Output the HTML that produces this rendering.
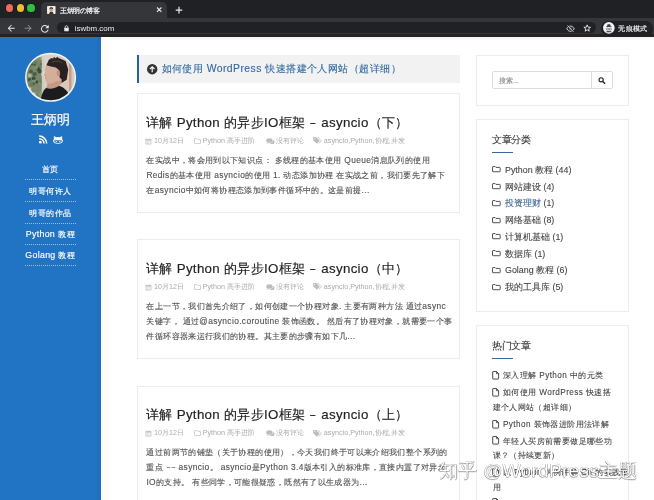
<!DOCTYPE html>
<html><head><meta charset="utf-8">
<style>
*{margin:0;padding:0;box-sizing:border-box}
html,body{width:654px;height:500px;overflow:hidden;background:#fff}
body{position:relative;font-family:"Liberation Sans",sans-serif;will-change:transform}
.a{position:absolute;white-space:nowrap}
svg{position:absolute;overflow:visible}
/* chrome */
#strip{left:0;top:0;width:654px;height:18px;background:#202124}
#tab{left:40.7px;top:1.5px;width:126px;height:17px;background:#35363a;border-radius:5px 5px 0 0}
#toolbar{left:0;top:17.6px;width:654px;height:16.7px;background:#35363a}
#sep{left:0;top:34.3px;width:654px;height:3.1px;background:#252220}
#omni{left:57px;top:21.7px;width:539px;height:11.8px;background:#202124;border-radius:6px}
#pill{left:600.8px;top:21px;width:52px;height:14.6px;background:#202124;border-radius:7.3px}
.light{border-radius:50%;width:7.2px;height:7.2px;top:4.4px;box-shadow:0 0 0 .6px rgba(0,0,0,.35)}
/* page */
#side{left:0;top:37.4px;width:101px;height:463px;background:#2173c4;box-shadow:inset -4px 0 0 rgba(40,60,90,.07)}
.menu{left:0;width:101px;text-align:center;color:#fff;font-size:8.4px;letter-spacing:.6px;-webkit-text-stroke:.15px #fff;line-height:12px}
.menu b{font-weight:normal;font-size:8.8px;letter-spacing:.3px}
.dot{left:25px;width:51px;height:0;border-top:1px dotted rgba(255,255,255,.55)}
#notice{left:137px;top:55px;width:323px;height:27.5px;background:#f2f2f2;border-left:2.5px solid #2b5f9a}
.card{left:137px;width:322.5px;height:120.2px;border:1px solid #ececec;background:#fff;box-shadow:0 0 .6px #f2f2f2}
.title{left:146px;font-size:13.3px;letter-spacing:.33px;color:#222;line-height:16px;-webkit-text-stroke:.15px #222}
.meta{font-size:7.2px;color:#aaa;line-height:10px}
.ex{left:146.4px;font-size:8.4px;letter-spacing:.37px;color:#505050;-webkit-text-stroke:.12px #505050;line-height:15.2px;white-space:nowrap}
.widget{left:475.5px;width:153.3px;border:1px solid #ececec;background:#fff;box-shadow:0 0 .6px #f2f2f2}
.wt{left:492px;font-size:9.6px;letter-spacing:-.3px;color:#333;line-height:12px;-webkit-text-stroke:.1px #333}
.wl{left:492px;width:21px;height:1px;background:#3a689a}
.ci{left:505px;font-size:8.9px;color:#3e3e3e;line-height:12px;-webkit-text-stroke:.08px #3e3e3e}
.hi{left:492.5px;font-size:8.2px;letter-spacing:.4px;color:#3e3e3e;-webkit-text-stroke:.08px #3e3e3e;line-height:14.8px;text-indent:10.5px}
</style></head><body>
<!-- browser chrome -->
<div class="a" id="strip"></div>
<div class="a light" style="left:6.3px;background:#ec6b5f"></div>
<div class="a light" style="left:17px;background:#efbd35"></div>
<div class="a light" style="left:27.4px;background:#2fbf45"></div>
<div class="a" id="tab"></div>
<svg style="left:47.1px;top:5.9px" width="8.6" height="8" viewBox="0 0 16 15"><rect width="16" height="15" rx="1.5" fill="#efe9e4"/><path d="M4 15c0-3 1.5-4 4-4s4 1 4 4z" fill="#3a302c"/><ellipse cx="8" cy="7.3" rx="3" ry="3.6" fill="#c89f86"/><path d="M4.6 6.5C4.4 3.5 6 2.3 8 2.3s3.8 1.2 3.5 4.2c-.8-1.3-2-1.8-3.5-1.8S5.4 5.2 4.6 6.5z" fill="#2d2522"/></svg>
<div class="a" style="left:60px;top:6.6px;font-size:6.6px;letter-spacing:-.45px;color:#f1f3f4;line-height:8px;-webkit-text-stroke:.2px #f1f3f4">王炳明の博客</div>
<svg style="left:0;top:0" width="654" height="40">
 <path d="M157 7.5l4.4 4.4M161.4 7.5L157 11.9" stroke="#e8eaed" stroke-width="1.1"/>
 <path d="M179 6.8v6.6M175.7 10.1h6.6" stroke="#e8eaed" stroke-width="1.2"/>
</svg>
<div class="a" id="toolbar"></div>
<div class="a" id="sep"></div>
<div class="a" id="omni"></div>
<div class="a" id="pill"></div>
<div class="a" style="left:74.8px;top:23.5px;font-size:7.9px;color:#eceef0;line-height:9px">iswbm.com</div>
<div class="a" style="left:618.4px;top:24.9px;font-size:7.2px;color:#f1f3f4;line-height:8px;-webkit-text-stroke:.18px #f1f3f4;letter-spacing:.15px">无痕模式</div>


<!-- chrome icons -->
<svg style="left:6.4px;top:23.2px" width="10.4" height="10.4" viewBox="0 0 24 24"><path fill="#e8eaed" d="M20 11H7.83l5.59-5.59L12 4l-8 8 8 8 1.41-1.41L7.83 13H20v-2z"/></svg>
<svg style="left:23.1px;top:23.2px" width="10.4" height="10.4" viewBox="0 0 24 24"><path fill="#8a8b8e" d="M12 4l-1.41 1.41L16.17 11H4v2h12.17l-5.58 5.59L12 20l8-8z"/></svg>
<svg style="left:39.4px;top:22.6px" width="11.7" height="11.7" viewBox="0 0 24 24"><path fill="#e8eaed" d="M17.65 6.35A7.958 7.958 0 0012 4c-4.42 0-7.99 3.58-7.99 8s3.57 8 7.99 8c3.73 0 6.840-2.55 7.73-6h-2.08A5.99 5.99 0 0112 18c-3.31 0-6-2.690-6-6s2.69-6 6-6c1.66 0 3.14.69 4.22 1.78L13 11h7V4l-2.35 2.35z"/></svg>
<svg style="left:63.8px;top:25px" width="5" height="6.5" viewBox="0 0 10 13"><path d="M2.3 6V4.2a2.7 2.7 0 015.4 0V6" fill="none" stroke="#e8eaed" stroke-width="1.5"/><rect x="0.5" y="5.6" width="9" height="7" rx="1" fill="#e8eaed"/></svg>
<svg style="left:566.2px;top:24.8px" width="9" height="7.4" viewBox="0 0 24 20"><path d="M2 10c2.5-4.5 6-7 10-7s7.5 2.5 10 7c-2.5 4.5-6 7-10 7S4.5 14.5 2 10z" fill="none" stroke="#e8eaed" stroke-width="2.6"/><circle cx="12" cy="10" r="3" fill="#e8eaed"/><path d="M4 1.5l16 17" stroke="#202124" stroke-width="4.5"/><path d="M4 1.5l16 17" stroke="#e8eaed" stroke-width="2.4"/></svg>
<svg style="left:583.2px;top:23.9px" width="8.4" height="8.4" viewBox="0 0 24 24"><polygon points="12.00,2.50 14.53,9.02 21.51,9.41 16.09,13.83 17.88,20.59 12.00,16.80 6.12,20.59 7.91,13.83 2.49,9.41 9.47,9.02" fill="none" stroke="#e8eaed" stroke-width="2.6" stroke-linejoin="round"/></svg>
<svg style="left:603px;top:22.4px" width="11.7" height="11.7" viewBox="0 0 24 24"><circle cx="12" cy="12" r="12" fill="#f1f3f4"/><path fill="#3c4043" d="M9.3 4.8h5.4l1.2 4.4h1.9v1H6.2v-1h1.9z"/><circle cx="8.9" cy="14.6" r="2.2" fill="none" stroke="#3c4043" stroke-width="1.1"/><circle cx="15.1" cy="14.6" r="2.2" fill="none" stroke="#3c4043" stroke-width="1.1"/><path d="M11.1 14.3q.9-.6 1.8 0" stroke="#3c4043" stroke-width="1" fill="none"/><path fill="#3c4043" d="M6.5 19.5q5.5-3 11 0v1.5h-11z" opacity=".9"/></svg>

<!-- page -->
<div class="a" style="left:101px;top:37.4px;width:553px;height:4px;background:linear-gradient(rgba(0,0,0,.05),rgba(0,0,0,0))"></div>
<div class="a" style="left:101px;top:37.4px;width:9px;height:463px;background:linear-gradient(90deg,#f4fbff,#fffdf4 30%,#fffef9 80%,#fff)"></div>
<div class="a" id="side"></div>
<svg style="left:25px;top:53.3px" width="51" height="49" viewBox="0 0 51 49">
<defs><clipPath id="cc"><ellipse cx="25.6" cy="24.3" rx="24.6" ry="23.6"/></clipPath>
<filter id="bl" x="-10%" y="-10%" width="120%" height="120%"><feGaussianBlur stdDeviation=".6"/></filter></defs>
<g clip-path="url(#cc)"><g filter="url(#bl)">
<rect width="51" height="49" fill="#d6c7b8"/>
<rect x="36" y="0" width="15" height="49" fill="#dcc8b8"/>
<rect x="44" y="6" width="2.5" height="43" fill="#c0a088"/>
<rect x="18" y="0" width="16" height="9" fill="#ddd1c8"/>
<path d="M0 0h19.5v49H0z" fill="#7a876c"/>
<circle cx="4.5" cy="26.7" r="1.6" fill="#3d4d37"/>
<circle cx="9.0" cy="28.5" r="2.0" fill="#7f8f6f"/>
<circle cx="8.9" cy="27.0" r="1.3" fill="#c0c6b2"/>
<circle cx="8.9" cy="41.0" r="1.8" fill="#c0c6b2"/>
<circle cx="16.4" cy="11.4" r="1.2" fill="#3d4d37"/>
<circle cx="7.4" cy="0.7" r="2.2" fill="#4c5e44"/>
<circle cx="14.4" cy="29.0" r="1.5" fill="#8d9a7e"/>
<circle cx="15.6" cy="13.2" r="2.0" fill="#6b7c5e"/>
<circle cx="13.6" cy="45.1" r="1.6" fill="#7f8f6f"/>
<circle cx="11.0" cy="47.2" r="1.2" fill="#a9b29a"/>
<circle cx="1.9" cy="6.7" r="1.3" fill="#c0c6b2"/>
<circle cx="8.3" cy="30.7" r="1.5" fill="#3d4d37"/>
<circle cx="15.8" cy="28.1" r="1.9" fill="#6b7c5e"/>
<circle cx="11.1" cy="44.3" r="2.1" fill="#8d9a7e"/>
<circle cx="16.3" cy="48.6" r="2.1" fill="#4c5e44"/>
<circle cx="13.3" cy="16.0" r="1.9" fill="#3d4d37"/>
<circle cx="10.8" cy="35.0" r="1.3" fill="#7f8f6f"/>
<circle cx="18.8" cy="13.1" r="1.2" fill="#6b7c5e"/>
<circle cx="16.2" cy="48.5" r="1.1" fill="#7f8f6f"/>
<circle cx="1.3" cy="44.0" r="1.0" fill="#6b7c5e"/>
<circle cx="14.6" cy="42.8" r="1.1" fill="#3d4d37"/>
<circle cx="14.5" cy="18.5" r="1.9" fill="#3d4d37"/>
<circle cx="16.7" cy="48.1" r="1.8" fill="#8d9a7e"/>
<circle cx="5.9" cy="3.8" r="2.0" fill="#8d9a7e"/>
<circle cx="18.0" cy="47.6" r="1.5" fill="#a9b29a"/>
<circle cx="3.0" cy="2.1" r="2.4" fill="#a9b29a"/>
<circle cx="6.8" cy="6.8" r="2.4" fill="#6b7c5e"/>
<circle cx="8.7" cy="25.5" r="2.0" fill="#3d4d37"/>
<circle cx="12.9" cy="5.0" r="2.6" fill="#7f8f6f"/>
<circle cx="9.6" cy="21.1" r="2.2" fill="#4c5e44"/>
<circle cx="17.8" cy="21.4" r="1.4" fill="#a9b29a"/>
<circle cx="10.4" cy="0.6" r="1.7" fill="#3d4d37"/>
<circle cx="6.0" cy="18.4" r="1.9" fill="#4c5e44"/>
<circle cx="1.1" cy="30.7" r="1.7" fill="#c0c6b2"/>
<circle cx="17.4" cy="29.8" r="1.4" fill="#6b7c5e"/>
<circle cx="0.4" cy="3.0" r="2.1" fill="#a9b29a"/>
<circle cx="4.8" cy="22.4" r="1.9" fill="#a9b29a"/>
<circle cx="3.4" cy="9.1" r="2.2" fill="#7f8f6f"/>
<circle cx="11.3" cy="14.7" r="1.6" fill="#7f8f6f"/>
<circle cx="15.4" cy="47.6" r="2.1" fill="#4c5e44"/>
<circle cx="5.9" cy="10.9" r="2.3" fill="#4c5e44"/>
<circle cx="6.2" cy="33.2" r="2.0" fill="#8d9a7e"/>
<circle cx="1.9" cy="15.8" r="1.5" fill="#7f8f6f"/>
<circle cx="4.3" cy="39.7" r="2.5" fill="#8d9a7e"/>
<circle cx="6.4" cy="31.9" r="2.4" fill="#6b7c5e"/>
<circle cx="5.1" cy="38.6" r="1.1" fill="#4c5e44"/>
<circle cx="6.0" cy="41.0" r="1.9" fill="#7f8f6f"/>
<circle cx="5.3" cy="39.6" r="2.0" fill="#7f8f6f"/>
<circle cx="11.8" cy="28.9" r="1.7" fill="#3d4d37"/>
<circle cx="15.1" cy="13.3" r="1.6" fill="#6b7c5e"/>
<circle cx="5.5" cy="27.8" r="1.1" fill="#6b7c5e"/>
<circle cx="3.0" cy="0.2" r="2.5" fill="#3d4d37"/>
<circle cx="18.8" cy="21.3" r="2.5" fill="#c0c6b2"/>
<circle cx="4.2" cy="36.5" r="2.3" fill="#c0c6b2"/>
<circle cx="14.2" cy="47.2" r="1.9" fill="#4c5e44"/>
<circle cx="16.4" cy="42.0" r="2.6" fill="#8d9a7e"/>
<circle cx="15.4" cy="2.2" r="2.4" fill="#c0c6b2"/>
<circle cx="9.7" cy="9.7" r="2.4" fill="#6b7c5e"/>
<circle cx="11.0" cy="0.6" r="2.2" fill="#4c5e44"/>
<circle cx="9.6" cy="11.7" r="1.0" fill="#3d4d37"/>
<circle cx="7.9" cy="46.0" r="2.0" fill="#a9b29a"/>
<circle cx="2.4" cy="47.6" r="1.9" fill="#7f8f6f"/>
<circle cx="14.9" cy="17.2" r="1.3" fill="#3d4d37"/>
<circle cx="16.9" cy="5.8" r="1.4" fill="#a9b29a"/>
<circle cx="17.5" cy="39.5" r="2.3" fill="#8d9a7e"/>
<circle cx="9.3" cy="28.0" r="1.6" fill="#7f8f6f"/>
<circle cx="5.2" cy="13.2" r="1.8" fill="#6b7c5e"/>
<circle cx="1.0" cy="15.8" r="2.3" fill="#7f8f6f"/>
<circle cx="1.0" cy="6.2" r="1.2" fill="#8d9a7e"/>
<circle cx="9.2" cy="1.6" r="2.1" fill="#3d4d37"/>
<rect x="16.8" y="0" width="4.2" height="49" fill="#d9d5cd" opacity=".9"/>
<path d="M15.5 49c.5-6 2-11 5.5-14 4-1.8 8.5-2.5 12.5-2.3 5 1 9 5 10.5 9l1 7.3z" fill="#1f1d1e"/>
<path d="M22.4 29.5c.2 2 0 4-1 5.6 3.5 1.2 8 .8 12-1.8l3.5-3.5-1-4z" fill="#c29a86"/>
<path d="M21.4 12.2l-1.6 3.7.5 3.1-1.6 3.1 1.6 1.6-.5 1.5 1 1.3-.4 1.5 1.2 1.5 3.4 1.4 4-1.5 3-1.5 3.6.3-.5-4-1.2-3.7-.2-7-3.8-8.5z" fill="#d4ae9a"/>
<path d="M19.8 22.5l1.3.3M20.2 25.2l1.2-.1" stroke="#a57a66" stroke-width=".6"/>
<path d="M21.4 12.2L24 6.5l8.3-2.1 8.3 3.6 2.6 8.4-1.5 10.4-5.2 3.1.2-3.4-2.1-1.9-.7-7.7-3.1-2.3-4.8-1.1z" fill="#2a2421"/>
<path d="M24.5 7.2l2-2.2 1.2 1.5 1.5-2.2 1.3 1.7 2-1.8 1.5 1.9" stroke="#3a302b" stroke-width="1" fill="none"/>
<path d="M26.5 9.5c3-1.8 7.5-2 11 .5" stroke="#57483f" stroke-width=".9" fill="none"/>
<ellipse cx="33.4" cy="20" rx="1.7" ry="3" fill="#bb927e"/>
</g></g>
<ellipse cx="25.6" cy="24.3" rx="24.8" ry="23.8" fill="none" stroke="#eef5fc" stroke-width="1.5"/>
</svg>
<div class="a" style="left:0;top:111.5px;width:101px;text-align:center;color:#fff;font-size:12.5px;line-height:16px;-webkit-text-stroke:.2px #fff">王炳明</div>

<div class="a menu" style="top:162.8px">首页</div>
<div class="a dot" style="top:179.3px"></div>
<div class="a menu" style="top:184.8px">明哥何许人</div>
<div class="a dot" style="top:200.5px"></div>
<div class="a menu" style="top:206.5px">明哥的作品</div>
<div class="a dot" style="top:223px"></div>
<div class="a menu" style="top:227.9px"><b>Python</b> 教程</div>
<div class="a dot" style="top:243.7px"></div>
<div class="a menu" style="top:249.4px"><b>Golang</b> 教程</div>
<div class="a dot" style="top:265px"></div>

<div class="a" id="notice"></div>
<div class="a" style="left:161.5px;top:63px;font-size:10.4px;letter-spacing:.45px;color:#33699f;line-height:12px;-webkit-text-stroke:.12px #33699f">如何使用 WordPress 快速搭建个人网站（超详细）</div>

<!-- card 1 -->
<div class="a card" style="top:93.3px"></div>
<div class="a title" style="top:114.5px">详解 Python 的异步IO框架 <span style="display:inline-block;transform:scaleX(.68)">–</span> asyncio（下）</div>
<div class="a meta" style="left:154px;top:135.5px">10月12日</div>
<div class="a meta" style="left:202.7px;top:135.5px">Python 高手进阶</div>
<div class="a meta" style="left:275.6px;top:135.5px">没有评论</div>
<div class="a meta" style="left:323.8px;top:135.5px">asyncio,Python,协程,并发</div>
<div class="a ex" style="top:152.6px">在实战中，将会用到以下知识点： 多线程的基本使用 Queue消息队列的使用<br>Redis的基本使用 asyncio的使用 1. 动态添加协程 在实战之前，我们要先了解下<br>在asyncio中如何将协程态添加到事件循环中的。这是前提...</div>

<!-- card 2 -->
<div class="a card" style="top:239.3px"></div>
<div class="a title" style="top:260.5px">详解 Python 的异步IO框架 <span style="display:inline-block;transform:scaleX(.68)">–</span> asyncio（中）</div>
<div class="a meta" style="left:154px;top:281.5px">10月12日</div>
<div class="a meta" style="left:202.7px;top:281.5px">Python 高手进阶</div>
<div class="a meta" style="left:275.6px;top:281.5px">没有评论</div>
<div class="a meta" style="left:323.8px;top:281.5px">asyncio,Python,协程,并发</div>
<div class="a ex" style="top:298.6px">在上一节，我们首先介绍了，如何创建一个协程对象. 主要有两种方法 通过async<br>关键字， 通过@asyncio.coroutine 装饰函数。 然后有了协程对象，就需要一个事<br>件循环容器来运行我们的协程。其主要的步骤有如下几...</div>

<!-- card 3 -->
<div class="a card" style="top:385.5px"></div>
<div class="a title" style="top:406.7px">详解 Python 的异步IO框架 <span style="display:inline-block;transform:scaleX(.68)">–</span> asyncio（上）</div>
<div class="a meta" style="left:154px;top:427.7px">10月12日</div>
<div class="a meta" style="left:202.7px;top:427.7px">Python 高手进阶</div>
<div class="a meta" style="left:275.6px;top:427.7px">没有评论</div>
<div class="a meta" style="left:323.8px;top:427.7px">asyncio,Python,协程,并发</div>
<div class="a ex" style="top:444.8px">通过前两节的铺垫（关于协程的使用），今天我们终于可以来介绍我们整个系列的<br>重点 <span style="display:inline-block;transform:scaleX(.75)">–</span><span style="display:inline-block;transform:scaleX(.75)">–</span> asyncio。 asyncio是Python 3.4版本引入的标准库，直接内置了对异步<br>IO的支持。 有些同学，可能很疑惑，既然有了以生成器为...</div>

<!-- right sidebar -->
<div class="a widget" style="top:55.2px;height:50.8px"></div>
<div class="a" style="left:492.4px;top:71.4px;width:120.2px;height:17.8px;border:1px solid #dcdcdc;border-radius:1.5px;background:#fff"></div>
<div class="a" style="left:591.2px;top:71.4px;width:1px;height:17.8px;background:#dcdcdc"></div>
<div class="a" style="left:499px;top:76px;font-size:7.4px;color:#8a8a8a;line-height:9px;-webkit-text-stroke:.1px #8a8a8a">搜索...</div>

<div class="a widget" style="top:118.9px;height:192.8px"></div>
<div class="a wt" style="top:134.4px">文章分类</div>
<div class="a wl" style="top:151.6px"></div>
<div class="a ci" style="top:163.8px">Python 教程 (44)</div>
<div class="a ci" style="top:180.5px">网站建设 (4)</div>
<div class="a ci" style="top:197.3px;color:#2f6aa6">投资理财 <span style="color:#444">(1)</span></div>
<div class="a ci" style="top:214px">网络基础 (8)</div>
<div class="a ci" style="top:230.8px">计算机基础 (1)</div>
<div class="a ci" style="top:247.6px">数据库 (1)</div>
<div class="a ci" style="top:264.3px">Golang 教程 (6)</div>
<div class="a ci" style="top:281.1px">我的工具库 (5)</div>

<div class="a widget" style="top:324.6px;height:200px"></div>
<div class="a wt" style="top:339.9px">热门文章</div>
<div class="a wl" style="top:357.9px"></div>
<div class="a hi" style="top:369.3px">深入理解 Python 中的元类</div>
<div class="a hi" style="top:386.1px">如何使用 WordPress 快速搭<br>建个人网站（超详细）</div>
<div class="a hi" style="top:417.7px">Python 装饰器进阶用法详解</div>
<div class="a hi" style="top:434.5px">年轻人买房前需要做足哪些功<br>课？（持续更新）</div>
<div class="a hi" style="top:466.1px">以 Python 为例讲解 Git 的实践应<br>用</div>
<div class="a hi" style="top:500.3px">Python 实现</div>

<!-- social -->
<svg style="left:38.9px;top:134.8px" width="8.4" height="8.8" viewBox="0 0 16 16"><circle cx="2.6" cy="13.4" r="2.6" fill="#fff"/><path d="M.3 6.6a9.2 9.2 0 019.2 9.2M.3 1.5A14.3 14.3 0 0114.6 15.8" stroke="#fff" stroke-width="3" fill="none"/></svg>
<svg style="left:52.7px;top:135.6px" width="10" height="7.8" viewBox="0 0 20 16"><path fill="#fff" d="M1.5 1.5c0-.8.6-1.2 1.3-.9L6.5 2.5c1.1-.3 2.3-.5 3.5-.5s2.4.2 3.5.5L17.2.6c.7-.3 1.3.1 1.3.9V6c.9 1.1 1.5 2.4 1.5 4 0 3.8-3.6 6-10 6S0 13.8 0 10c0-1.6.6-2.9 1.5-4z"/><path fill="#2473c3" d="M4 8.8h12c1.2 0 1.7 1 1.7 2.2 0 2.2-2.6 3.2-7.7 3.2S2.3 13.2 2.3 11c0-1.2.5-2.2 1.7-2.2z"/><ellipse cx="6.4" cy="11.3" rx="1.2" ry="1.6" fill="#fff"/><ellipse cx="13.6" cy="11.3" rx="1.2" ry="1.6" fill="#fff"/></svg>
<!-- notice icon -->
<svg style="left:147.1px;top:63.5px" width="10.4" height="10.4" viewBox="0 0 20 20"><circle cx="10" cy="10" r="10" fill="#333"/><path d="M10 15.8V5M5.6 9.6L10 5.2l4.4 4.4" fill="none" stroke="#fff" stroke-width="2.2"/></svg>
<svg style="left:145px;top:137.6px" width="6.9" height="6.6" viewBox="0 0 14 14"><path d="M1.5 3h11v10h-11z" fill="none" stroke="#bdbdbd" stroke-width="1.5"/><path d="M1.5 3h11v2.5h-11z" fill="#bdbdbd"/><path d="M4 1v3M10 1v3" stroke="#bdbdbd" stroke-width="1.5"/><path d="M3.5 7.5h2v1.5h-2zM6.5 7.5h2v1.5h-2zM9.5 7.5h1.5v1.5h-1.5zM3.5 10h2v1.5h-2zM6.5 10h2v1.5h-2z" fill="#bdbdbd"/></svg>
<svg style="left:194.3px;top:138.2px" width="7" height="5.6" viewBox="0 0 14 11"><path d="M1 1.8c0-.5.3-.8.8-.8h3.5l1.4 1.5h5.5c.5 0 .8.3.8.8v6.9c0 .5-.3.8-.8.8H1.8c-.5 0-.8-.3-.8-.8z" fill="none" stroke="#bdbdbd" stroke-width="1.4"/></svg>
<svg style="left:265.5px;top:137.8px" width="8.8" height="6.4" viewBox="0 0 18 13"><ellipse cx="7" cy="5" rx="6.5" ry="4.6" fill="#bdbdbd"/><path d="M3 8.5L2 12l4-2.5z" fill="#bdbdbd"/><path d="M14.5 4.5c2 .9 3.3 2.3 3.3 3.9 0 1.3-.8 2.4-2 3.1l.8 1.5-3-1c-.7.1-1.1.2-1.8.2-2.2 0-4-.8-5-2 4.8 0 7.9-2.4 7.7-5.7z" fill="#bdbdbd"/></svg>
<svg style="left:312.6px;top:137.3px" width="9.2" height="7" viewBox="0 0 18 14"><path d="M0 1.3C0 .6.6 0 1.3 0h4.2c.4 0 .7.1 1 .4l6.1 6.1c.5.5.5 1.3 0 1.8L8.3 12.6c-.5.5-1.3.5-1.8 0L.4 6.5C.1 6.2 0 5.9 0 5.5z" fill="#bdbdbd"/><circle cx="3" cy="3" r="1.2" fill="#fff"/><path d="M8 0h1.5c.4 0 .7.1 1 .4l6.1 6.1c.5.5.5 1.3 0 1.8l-4.3 4.3c-.5.5-1.1.5-1.6.1l4.6-4.6c.5-.5.5-1.3 0-1.8z" fill="#bdbdbd"/></svg>
<svg style="left:145px;top:283.6px" width="6.9" height="6.6" viewBox="0 0 14 14"><path d="M1.5 3h11v10h-11z" fill="none" stroke="#bdbdbd" stroke-width="1.5"/><path d="M1.5 3h11v2.5h-11z" fill="#bdbdbd"/><path d="M4 1v3M10 1v3" stroke="#bdbdbd" stroke-width="1.5"/><path d="M3.5 7.5h2v1.5h-2zM6.5 7.5h2v1.5h-2zM9.5 7.5h1.5v1.5h-1.5zM3.5 10h2v1.5h-2zM6.5 10h2v1.5h-2z" fill="#bdbdbd"/></svg>
<svg style="left:194.3px;top:284.2px" width="7" height="5.6" viewBox="0 0 14 11"><path d="M1 1.8c0-.5.3-.8.8-.8h3.5l1.4 1.5h5.5c.5 0 .8.3.8.8v6.9c0 .5-.3.8-.8.8H1.8c-.5 0-.8-.3-.8-.8z" fill="none" stroke="#bdbdbd" stroke-width="1.4"/></svg>
<svg style="left:265.5px;top:283.8px" width="8.8" height="6.4" viewBox="0 0 18 13"><ellipse cx="7" cy="5" rx="6.5" ry="4.6" fill="#bdbdbd"/><path d="M3 8.5L2 12l4-2.5z" fill="#bdbdbd"/><path d="M14.5 4.5c2 .9 3.3 2.3 3.3 3.9 0 1.3-.8 2.4-2 3.1l.8 1.5-3-1c-.7.1-1.1.2-1.8.2-2.2 0-4-.8-5-2 4.8 0 7.9-2.4 7.7-5.7z" fill="#bdbdbd"/></svg>
<svg style="left:312.6px;top:283.3px" width="9.2" height="7" viewBox="0 0 18 14"><path d="M0 1.3C0 .6.6 0 1.3 0h4.2c.4 0 .7.1 1 .4l6.1 6.1c.5.5.5 1.3 0 1.8L8.3 12.6c-.5.5-1.3.5-1.8 0L.4 6.5C.1 6.2 0 5.9 0 5.5z" fill="#bdbdbd"/><circle cx="3" cy="3" r="1.2" fill="#fff"/><path d="M8 0h1.5c.4 0 .7.1 1 .4l6.1 6.1c.5.5.5 1.3 0 1.8l-4.3 4.3c-.5.5-1.1.5-1.6.1l4.6-4.6c.5-.5.5-1.3 0-1.8z" fill="#bdbdbd"/></svg>
<svg style="left:145px;top:429.8px" width="6.9" height="6.6" viewBox="0 0 14 14"><path d="M1.5 3h11v10h-11z" fill="none" stroke="#bdbdbd" stroke-width="1.5"/><path d="M1.5 3h11v2.5h-11z" fill="#bdbdbd"/><path d="M4 1v3M10 1v3" stroke="#bdbdbd" stroke-width="1.5"/><path d="M3.5 7.5h2v1.5h-2zM6.5 7.5h2v1.5h-2zM9.5 7.5h1.5v1.5h-1.5zM3.5 10h2v1.5h-2zM6.5 10h2v1.5h-2z" fill="#bdbdbd"/></svg>
<svg style="left:194.3px;top:430.4px" width="7" height="5.6" viewBox="0 0 14 11"><path d="M1 1.8c0-.5.3-.8.8-.8h3.5l1.4 1.5h5.5c.5 0 .8.3.8.8v6.9c0 .5-.3.8-.8.8H1.8c-.5 0-.8-.3-.8-.8z" fill="none" stroke="#bdbdbd" stroke-width="1.4"/></svg>
<svg style="left:265.5px;top:430.0px" width="8.8" height="6.4" viewBox="0 0 18 13"><ellipse cx="7" cy="5" rx="6.5" ry="4.6" fill="#bdbdbd"/><path d="M3 8.5L2 12l4-2.5z" fill="#bdbdbd"/><path d="M14.5 4.5c2 .9 3.3 2.3 3.3 3.9 0 1.3-.8 2.4-2 3.1l.8 1.5-3-1c-.7.1-1.1.2-1.8.2-2.2 0-4-.8-5-2 4.8 0 7.9-2.4 7.7-5.7z" fill="#bdbdbd"/></svg>
<svg style="left:312.6px;top:429.5px" width="9.2" height="7" viewBox="0 0 18 14"><path d="M0 1.3C0 .6.6 0 1.3 0h4.2c.4 0 .7.1 1 .4l6.1 6.1c.5.5.5 1.3 0 1.8L8.3 12.6c-.5.5-1.3.5-1.8 0L.4 6.5C.1 6.2 0 5.9 0 5.5z" fill="#bdbdbd"/><circle cx="3" cy="3" r="1.2" fill="#fff"/><path d="M8 0h1.5c.4 0 .7.1 1 .4l6.1 6.1c.5.5.5 1.3 0 1.8l-4.3 4.3c-.5.5-1.1.5-1.6.1l4.6-4.6c.5-.5.5-1.3 0-1.8z" fill="#bdbdbd"/></svg>
<svg style="left:598.3px;top:77.3px" width="8" height="6.8" viewBox="0 0 14 12"><circle cx="5.5" cy="5" r="3.7" fill="none" stroke="#222" stroke-width="2"/><path d="M8.2 7.8l3.6 3.4" stroke="#222" stroke-width="2.4" stroke-linecap="round"/></svg>
<svg style="left:491.9px;top:166.4px" width="8.7" height="6.3" viewBox="0 0 17 12"><path d="M1 2c0-.6.4-1 1-1h4.2l1.5 1.6h7.3c.6 0 1 .4 1 1V10c0 .6-.4 1-1 1H2c-.6 0-1-.4-1-1z" fill="none" stroke="#444" stroke-width="1.8"/></svg>
<svg style="left:491.9px;top:183.2px" width="8.7" height="6.3" viewBox="0 0 17 12"><path d="M1 2c0-.6.4-1 1-1h4.2l1.5 1.6h7.3c.6 0 1 .4 1 1V10c0 .6-.4 1-1 1H2c-.6 0-1-.4-1-1z" fill="none" stroke="#444" stroke-width="1.8"/></svg>
<svg style="left:491.9px;top:199.9px" width="8.7" height="6.3" viewBox="0 0 17 12"><path d="M1 2c0-.6.4-1 1-1h4.2l1.5 1.6h7.3c.6 0 1 .4 1 1V10c0 .6-.4 1-1 1H2c-.6 0-1-.4-1-1z" fill="none" stroke="#444" stroke-width="1.8"/></svg>
<svg style="left:491.9px;top:216.7px" width="8.7" height="6.3" viewBox="0 0 17 12"><path d="M1 2c0-.6.4-1 1-1h4.2l1.5 1.6h7.3c.6 0 1 .4 1 1V10c0 .6-.4 1-1 1H2c-.6 0-1-.4-1-1z" fill="none" stroke="#444" stroke-width="1.8"/></svg>
<svg style="left:491.9px;top:233.4px" width="8.7" height="6.3" viewBox="0 0 17 12"><path d="M1 2c0-.6.4-1 1-1h4.2l1.5 1.6h7.3c.6 0 1 .4 1 1V10c0 .6-.4 1-1 1H2c-.6 0-1-.4-1-1z" fill="none" stroke="#444" stroke-width="1.8"/></svg>
<svg style="left:491.9px;top:250.2px" width="8.7" height="6.3" viewBox="0 0 17 12"><path d="M1 2c0-.6.4-1 1-1h4.2l1.5 1.6h7.3c.6 0 1 .4 1 1V10c0 .6-.4 1-1 1H2c-.6 0-1-.4-1-1z" fill="none" stroke="#444" stroke-width="1.8"/></svg>
<svg style="left:491.9px;top:267.0px" width="8.7" height="6.3" viewBox="0 0 17 12"><path d="M1 2c0-.6.4-1 1-1h4.2l1.5 1.6h7.3c.6 0 1 .4 1 1V10c0 .6-.4 1-1 1H2c-.6 0-1-.4-1-1z" fill="none" stroke="#444" stroke-width="1.8"/></svg>
<svg style="left:491.9px;top:283.7px" width="8.7" height="6.3" viewBox="0 0 17 12"><path d="M1 2c0-.6.4-1 1-1h4.2l1.5 1.6h7.3c.6 0 1 .4 1 1V10c0 .6-.4 1-1 1H2c-.6 0-1-.4-1-1z" fill="none" stroke="#444" stroke-width="1.8"/></svg>
<svg style="left:491.9px;top:371.1px" width="7.3" height="8.6" viewBox="0 0 13 16"><path d="M1 1.8c0-.5.3-.8.8-.8h6.4l3.8 3.8v9.4c0 .5-.3.8-.8.8H1.8c-.5 0-.8-.3-.8-.8z" fill="none" stroke="#444" stroke-width="1.8"/><path d="M8 1v4h4" fill="none" stroke="#444" stroke-width="1.6"/></svg>
<svg style="left:491.9px;top:387.9px" width="7.3" height="8.6" viewBox="0 0 13 16"><path d="M1 1.8c0-.5.3-.8.8-.8h6.4l3.8 3.8v9.4c0 .5-.3.8-.8.8H1.8c-.5 0-.8-.3-.8-.8z" fill="none" stroke="#444" stroke-width="1.8"/><path d="M8 1v4h4" fill="none" stroke="#444" stroke-width="1.6"/></svg>
<svg style="left:491.9px;top:419.6px" width="7.3" height="8.6" viewBox="0 0 13 16"><path d="M1 1.8c0-.5.3-.8.8-.8h6.4l3.8 3.8v9.4c0 .5-.3.8-.8.8H1.8c-.5 0-.8-.3-.8-.8z" fill="none" stroke="#444" stroke-width="1.8"/><path d="M8 1v4h4" fill="none" stroke="#444" stroke-width="1.6"/></svg>
<svg style="left:491.9px;top:436.4px" width="7.3" height="8.6" viewBox="0 0 13 16"><path d="M1 1.8c0-.5.3-.8.8-.8h6.4l3.8 3.8v9.4c0 .5-.3.8-.8.8H1.8c-.5 0-.8-.3-.8-.8z" fill="none" stroke="#444" stroke-width="1.8"/><path d="M8 1v4h4" fill="none" stroke="#444" stroke-width="1.6"/></svg>
<svg style="left:491.9px;top:467.7px" width="7.3" height="8.6" viewBox="0 0 13 16"><path d="M1 1.8c0-.5.3-.8.8-.8h6.4l3.8 3.8v9.4c0 .5-.3.8-.8.8H1.8c-.5 0-.8-.3-.8-.8z" fill="none" stroke="#444" stroke-width="1.8"/><path d="M8 1v4h4" fill="none" stroke="#444" stroke-width="1.6"/></svg>
<svg style="left:491.9px;top:497.5px" width="7.3" height="8.6" viewBox="0 0 13 16"><path d="M1 1.8c0-.5.3-.8.8-.8h6.4l3.8 3.8v9.4c0 .5-.3.8-.8.8H1.8c-.5 0-.8-.3-.8-.8z" fill="none" stroke="#444" stroke-width="1.8"/><path d="M8 1v4h4" fill="none" stroke="#444" stroke-width="1.6"/></svg>
<div class="a" style="left:439px;top:459px;font-size:19.2px;line-height:24px;color:#fff;text-shadow:.5px 0 .4px rgba(0,0,0,.28),-.5px 0 .4px rgba(0,0,0,.28),0 .5px .4px rgba(0,0,0,.28),0 -.5px .4px rgba(0,0,0,.28);letter-spacing:.2px">知乎 @WordPress主题</div>
</body></html>
